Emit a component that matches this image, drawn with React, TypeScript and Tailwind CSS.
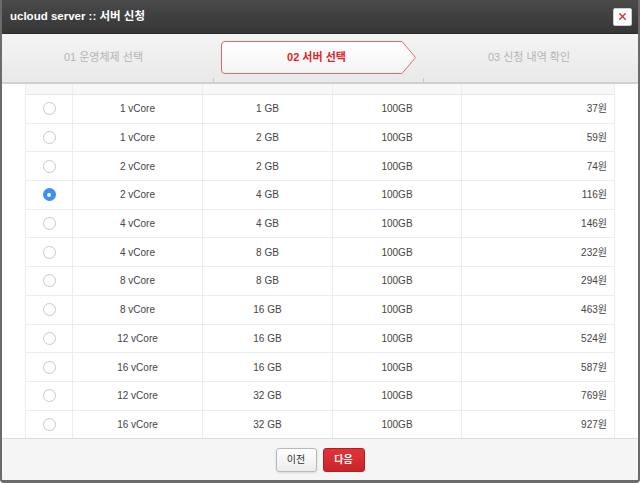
import { X } from "lucide-react";

const rows = [
  { cpu: "1 vCore", mem: "1 GB", disk: "100GB", price: "37원" },
  { cpu: "1 vCore", mem: "2 GB", disk: "100GB", price: "59원" },
  { cpu: "2 vCore", mem: "2 GB", disk: "100GB", price: "74원" },
  { cpu: "2 vCore", mem: "4 GB", disk: "100GB", price: "116원", checked: true },
  { cpu: "4 vCore", mem: "4 GB", disk: "100GB", price: "146원" },
  { cpu: "4 vCore", mem: "8 GB", disk: "100GB", price: "232원" },
  { cpu: "8 vCore", mem: "8 GB", disk: "100GB", price: "294원" },
  { cpu: "8 vCore", mem: "16 GB", disk: "100GB", price: "463원" },
  { cpu: "12 vCore", mem: "16 GB", disk: "100GB", price: "524원" },
  { cpu: "16 vCore", mem: "16 GB", disk: "100GB", price: "587원" },
  { cpu: "12 vCore", mem: "32 GB", disk: "100GB", price: "769원" },
  { cpu: "16 vCore", mem: "32 GB", disk: "100GB", price: "927원" },
];

const font = "font-['Liberation_Sans','Noto_Sans_CJK_KR',sans-serif]";

const Radio = ({ checked }: { checked?: boolean }) =>
  checked ? (
    <span className="w-[13px] h-[13px] rounded-full bg-[#3d8ef5] flex items-center justify-center">
      <span className="w-[4px] h-[4px] rounded-full bg-white" />
    </span>
  ) : (
    <span className="w-[13px] h-[13px] rounded-full border border-[#c8c8c8] bg-white" />
  );

const ActiveStep = () => (
  <div className="relative w-[196px] h-[33px] flex items-center justify-center">
    <svg className="absolute inset-0" width="196" height="33" viewBox="0 0 196 33">
      <defs>
        <linearGradient id="stepbg" x1="0" y1="0" x2="0" y2="1">
          <stop offset="0" stopColor="#ffffff" />
          <stop offset="1" stopColor="#f4f4f4" />
        </linearGradient>
      </defs>
      <path
        d="M4 0.5 H181 L194.5 16.5 L181 32.5 H4 Q0.5 32.5 0.5 29 V4 Q0.5 0.5 4 0.5 Z"
        fill="url(#stepbg)"
        stroke="#e36a6a"
        strokeWidth="1"
      />
    </svg>
    <span className="relative text-[11px] font-bold text-[#e0242c] pr-[4px]">02 서버 선택</span>
  </div>
);

const App = () => {
  return (
    <div className={`w-[640px] h-[483px] bg-white ${font}`}>
      <div className="w-full h-full flex flex-col border-x-2 border-b-[3px] border-[#6b6b6b] rounded-b-[4px] overflow-hidden bg-white">
        <div className="h-[34px] shrink-0 bg-gradient-to-b from-[#4a4a4a] to-[#363636] border-b border-[#2a2a2a] flex items-center justify-between pl-[8px] pr-[6px]">
          <h1 className="text-white font-bold text-[11.5px]">ucloud server :: 서버 신청</h1>
          <button className="w-[19px] h-[18px] bg-white border border-[#ccc] rounded-[2px] flex items-center justify-center">
            <X size={11} strokeWidth={3} color="#e02a2a" />
          </button>
        </div>

        <div className="h-[50px] shrink-0 bg-gradient-to-b from-[#f4f4f4] to-[#e9e9e9] border-b-2 border-[#d0d0d0] flex">
          <div className="w-[211px] flex items-center justify-center text-[11px] text-[#b4b4b4] pb-[2px] pr-[8px]">
            01 운영체제 선택
          </div>
          <div className="w-[211px] flex items-center justify-center relative pb-[2px]">
            <span className="absolute left-0 bottom-0 w-px h-[4px] bg-[#c4c4c4]" />
            <span className="absolute right-0 bottom-0 w-px h-[4px] bg-[#c4c4c4]" />
            <ActiveStep />
          </div>
          <div className="flex-1 flex items-center justify-center text-[11px] text-[#b4b4b4] pb-[2px] pr-[4px]">
            03 신청 내역 확인
          </div>
        </div>

        <div className="flex-1 min-h-0 overflow-hidden pl-[23px] pr-[21px] bg-white">
          <div className="w-[590px] border-x border-[#ececec] text-[10px] text-[#444]">
            <div className="flex h-[11px] bg-[#f8f8f8] border-b border-[#e6e6e6]">
              <div className="w-[47px] border-r border-[#ececec]" />
              <div className="w-[130px] border-r border-[#ececec]" />
              <div className="w-[130px] border-r border-[#ececec]" />
              <div className="w-[129px] border-r border-[#ececec]" />
              <div className="flex-1" />
            </div>
            {rows.map((r, i) => (
              <div key={i} className="flex h-[28.7px] border-b border-[#ececec]">
                <div className="w-[47px] border-r border-[#ececec] flex items-center justify-center">
                  <Radio checked={r.checked} />
                </div>
                <div className="w-[130px] border-r border-[#ececec] flex items-center justify-center">{r.cpu}</div>
                <div className="w-[130px] border-r border-[#ececec] flex items-center justify-center">{r.mem}</div>
                <div className="w-[129px] border-r border-[#ececec] flex items-center justify-center">{r.disk}</div>
                <div className="flex-1 flex items-center justify-end pr-[7px]">{r.price}</div>
              </div>
            ))}
          </div>
        </div>

        <div className="h-[42px] shrink-0 bg-[#f5f5f5] border-t border-[#dcdcdc] flex items-center justify-center gap-[6px]">
          <button className="w-[41px] h-[24px] rounded-[3px] border border-[#b8b8b8] bg-gradient-to-b from-white to-[#ececec] text-[10px] text-[#333] shadow-sm">
            이전
          </button>
          <button className="w-[42px] h-[24px] rounded-[3px] border border-[#b01e22] bg-gradient-to-b from-[#e0353a] to-[#c8242a] text-[10px] font-bold text-white">
            다음
          </button>
        </div>
      </div>
    </div>
  );
};

export default App;
